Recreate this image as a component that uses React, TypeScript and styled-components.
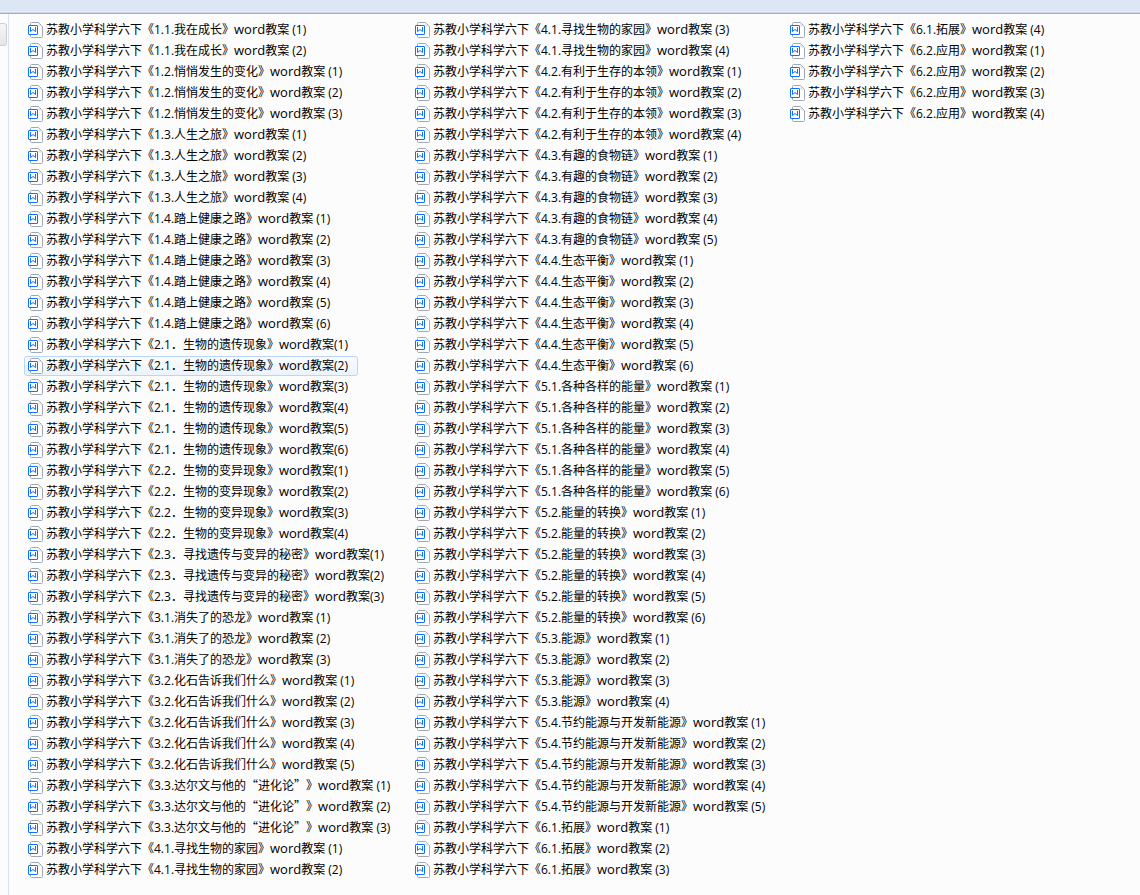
import React from 'react';
import styled, { createGlobalStyle, css } from 'styled-components';

const GlobalStyle = createGlobalStyle`
  * { box-sizing: border-box; }
  body {
    margin: 0;
    background: #fcfcfc;
    color: #000;
    font-family: "Open Sans", "Noto Sans CJK SC", sans-serif;
    font-size: 12px;
    line-height: 18px;
    text-spacing-trim: space-all;
  }
`;

const Window = styled.div`
  display: flex;
  flex-direction: column;
  min-height: 100vh;
`;

const Toolbar = styled.header`
  height: 14px;
  background: linear-gradient(#dce6f4 0 11px, #e4eefa 11px 12px, #cdd9ea 12px 13px, #a0afc3 13px);
`;

const Body = styled.div`
  display: flex;
  flex: 1;
`;

const Sidebar = styled.aside`
  width: 9px;
  flex: none;
  padding-top: 9px;
  border-right: 1px solid #d2e4f5;
`;

const ScrollThumb = styled.div`
  width: 7px;
  height: 23px;
  border: 1px solid #cfcfcf;
  border-left: 0;
  border-radius: 0 3px 3px 0;
  background: linear-gradient(#f6f6f6, #e6e6e6);
`;

const FileList = styled.ul`
  flex: 1;
  margin: 0;
  padding: 6px 0 14px 15px;
  list-style: none;
  display: grid;
  grid-auto-flow: column;
  grid-template-rows: repeat(41, 20px);
  grid-template-columns: 387px 375px max-content;
  row-gap: 1px;
  align-content: start;
`;

const FileLink = styled.a<{ $hot: boolean }>`
  display: inline-flex;
  align-items: center;
  gap: 3px;
  height: 20px;
  padding: 0 9px 0 3px;
  border: 1px solid transparent;
  border-radius: 3px;
  color: inherit;
  text-decoration: none;
  white-space: pre;
  ${({ $hot }) =>
    $hot &&
    css`
      border-color: #b8d6fb;
      background: linear-gradient(#fafbfd, #ebf3fd);
    `}
`;

const IconSvg = styled.svg`
  width: 15px;
  height: 16px;
  flex: none;
`;

const Quote = styled.span`
  font-family: "Noto Sans CJK SC", sans-serif;
  line-height: 0;
`;

const Latin = styled.span`
  font-size: 13px;
  line-height: 0;
`;

const DocIcon = () => (
  <IconSvg viewBox="0 0 15 16" aria-hidden="true">
    <path d="M2.5 2V1.5Q2.5.5 3.5.5H10.5L14.5 4.5V14.5Q14.5 15.5 13.5 15.5H3.5Q2.5 15.5 2.5 14.5V2" fill="#fff" stroke="#9fa8b8" />
    <path d="M11 1.5V4H14" fill="none" stroke="#d5d9e0" />
    <rect x=".5" y="3.5" width="9" height="9" rx=".5" fill="#fff" stroke="#0f70ff" />
    <path d="M2.5 5V9.5L5 7.5L7.5 9.5V5" fill="none" stroke="#0f70ff" />
  </IconSvg>
);

type Lesson = { title: string; count: number; tight?: boolean };

const lessons: Lesson[] = [
  { title: '1.1.我在成长', count: 2 },
  { title: '1.2.悄悄发生的变化', count: 3 },
  { title: '1.3.人生之旅', count: 4 },
  { title: '1.4.踏上健康之路', count: 6 },
  { title: '2.1．生物的遗传现象', count: 6, tight: true },
  { title: '2.2．生物的变异现象', count: 4, tight: true },
  { title: '2.3．寻找遗传与变异的秘密', count: 3, tight: true },
  { title: '3.1.消失了的恐龙', count: 3 },
  { title: '3.2.化石告诉我们什么', count: 5 },
  { title: '3.3.达尔文与他的“进化论”', count: 3 },
  { title: '4.1.寻找生物的家园', count: 4 },
  { title: '4.2.有利于生存的本领', count: 4 },
  { title: '4.3.有趣的食物链', count: 5 },
  { title: '4.4.生态平衡', count: 6 },
  { title: '5.1.各种各样的能量', count: 6 },
  { title: '5.2.能量的转换', count: 6 },
  { title: '5.3.能源', count: 4 },
  { title: '5.4.节约能源与开发新能源', count: 5 },
  { title: '6.1.拓展', count: 4 },
  { title: '6.2.应用', count: 4 },
];

const files = lessons.flatMap(({ title, count, tight }) =>
  Array.from({ length: count }, (_, i) => `苏教小学科学六下《${title}》word教案${tight ? '' : ' '}(${i + 1})`),
);

const HOT_FILE = '苏教小学科学六下《2.1．生物的遗传现象》word教案(2)';

// Curly quotes take the full-width form of the Chinese face; Latin words are set one size up.
const FileName = ({ name }: { name: string }) => (
  <span>
    {name.split(/([“”]|[a-z]+)/).map((part, i) => {
      if (i % 2 === 0) return part;
      return /[a-z]/.test(part) ? <Latin key={i}>{part}</Latin> : <Quote key={i}>{part}</Quote>;
    })}
  </span>
);

export default function App() {
  return (
    <Window lang="zh-CN">
      <GlobalStyle />
      <Toolbar />
      <Body>
        <Sidebar>
          <ScrollThumb />
        </Sidebar>
        <FileList>
          {files.map((name) => (
            <li key={name}>
              <FileLink href="#" $hot={name === HOT_FILE}>
                <DocIcon />
                <FileName name={name} />
              </FileLink>
            </li>
          ))}
        </FileList>
      </Body>
    </Window>
  );
}
